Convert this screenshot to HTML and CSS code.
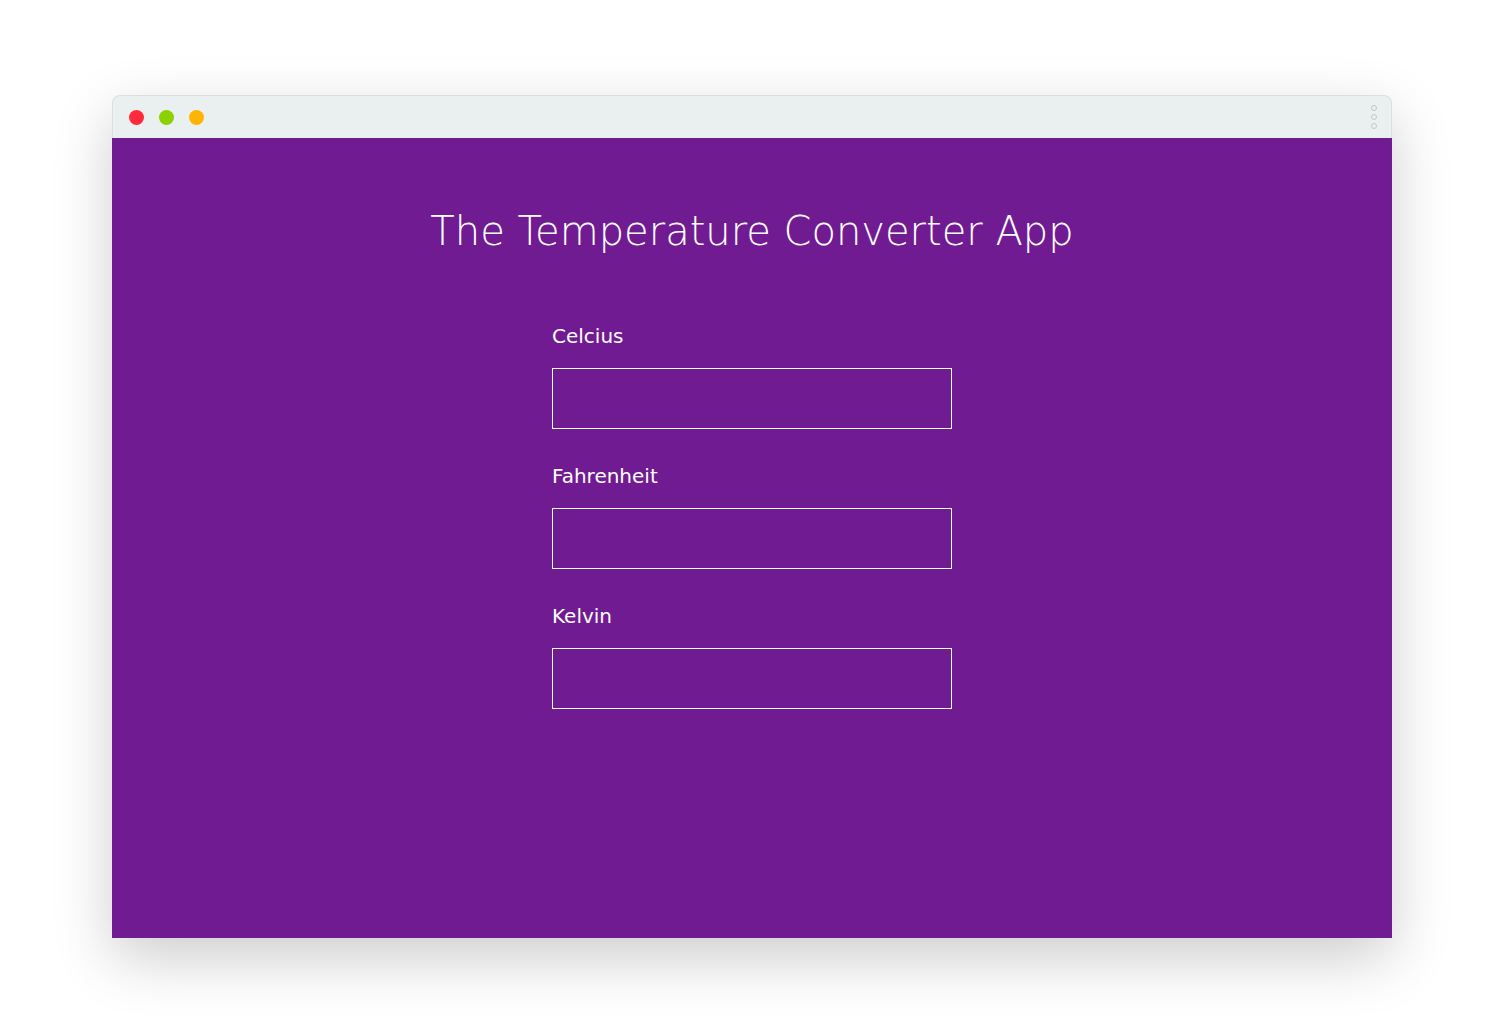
FILE: index.html
```html
<!DOCTYPE html>
<html>
<head>
<meta charset="utf-8">
<link rel="stylesheet" href="styles.css">
</head>
<body>
<div class="stage">
  <div class="window">
    <div class="titlebar">
      <div class="lights">
        <span class="dot red"></span>
        <span class="dot green"></span>
        <span class="dot orange"></span>
      </div>
      <div class="menu">
        <span class="mdot"></span>
        <span class="mdot"></span>
        <span class="mdot"></span>
      </div>
    </div>
    <div class="content">
      <h1 class="title">The Temperature Converter App</h1>
      <form class="form">
        <div class="field">
          <label class="label">Celcius</label>
          <input class="input" type="text">
        </div>
        <div class="field">
          <label class="label">Fahrenheit</label>
          <input class="input" type="text">
        </div>
        <div class="field">
          <label class="label">Kelvin</label>
          <input class="input" type="text">
        </div>
      </form>
    </div>
  </div>
</div>
</body>
</html>
```
FILE: styles.css
```css
html, body {
  margin: 0;
  padding: 0;
  background: #ffffff;
  font-family: "DejaVu Sans", sans-serif;
}
.stage {
  padding: 95px 0 0 112px;
  height: 1018px;
  box-sizing: border-box;
  overflow: hidden;
}
.window {
  width: 1280px;
  border-radius: 8px 8px 0 0;
  box-shadow: 0 20px 60px rgba(0,0,0,0.2);
}
.titlebar {
  height: 43px;
  box-sizing: border-box;
  background: #eaf0f0;
  border: 1px solid #dcdfe0;
  border-bottom: none;
  border-radius: 8px 8px 0 0;
  display: flex;
  align-items: center;
  justify-content: space-between;
  padding: 0 14px 0 16px;
}
.lights {
  display: flex;
  gap: 15px;
}
.dot {
  width: 15px;
  height: 15px;
  border-radius: 50%;
  display: block;
}
.red { background: #ff2a3b; }
.green { background: #8bd100; }
.orange { background: #ffb500; }
.menu {
  display: flex;
  flex-direction: column;
  gap: 3px;
}
.mdot {
  width: 4px;
  height: 4px;
  border: 1px solid #c3c6c8;
  border-radius: 50%;
  display: block;
}
.content {
  height: 800px;
  background: #711b93;
  color: #ffffff;
  display: flex;
  flex-direction: column;
  align-items: center;
}
.title {
  margin: 68px 0 0;
  font-size: 40px;
  font-weight: 200;
  line-height: 50px;
}
.form {
  margin-top: 68px;
  display: flex;
  flex-direction: column;
  gap: 35px;
}
.field {
  display: flex;
  flex-direction: column;
  gap: 20px;
}
.label {
  font-size: 20px;
  line-height: 24px;
}
.input {
  width: 400px;
  height: 61px;
  box-sizing: border-box;
  border: 1px solid #ffffff;
  background: transparent;
  margin: 0;
  outline: none;
  color: #fff;
  font-size: 20px;
}
```
